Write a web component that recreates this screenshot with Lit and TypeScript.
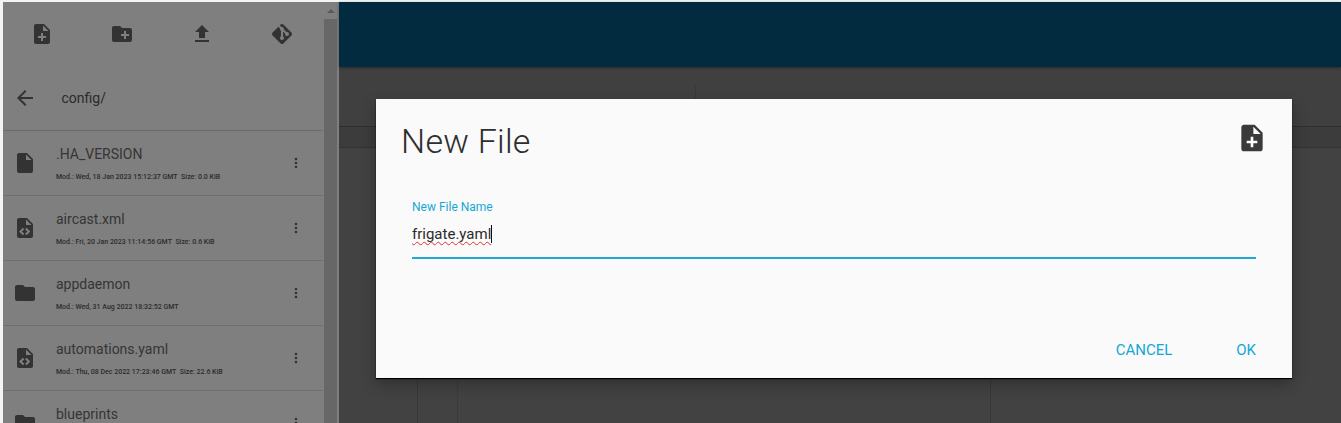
import { LitElement, html, css, svg } from "lit";
import { customElement } from "lit/decorators.js";

const P = {
  noteAdd: "M14 2H6c-1.1 0-1.99.9-1.99 2L4 20c0 1.1.89 2 1.99 2H18c1.1 0 2-.9 2-2V8l-6-6zm2 14h-3v3h-2v-3H8v-2h3v-3h2v3h3v2zm-3-7V3.5L18.5 9H13z",
  newFolder: "M20 6h-8l-2-2H4c-1.11 0-1.99.89-1.99 2L2 18c0 1.11.89 2 2 2h16c1.11 0 2-.89 2-2V8c0-1.11-.89-2-2-2zm-1 8h-3v3h-2v-3h-3v-2h3V9h2v3h3v2z",
  upload: "M9 16h6v-6h4l-7-7-7 7h4zm-4 2h14v2H5z",
  git: "M2.6,10.59L8.38,4.8L10.07,6.5C9.83,7.35 10.22,8.28 11,8.73V14.27C10.4,14.61 10,15.26 10,16A2,2 0 0,0 12,18A2,2 0 0,0 14,16C14,15.26 13.6,14.61 13,14.27V9.41L15.07,11.5C15,11.65 15,11.82 15,12A2,2 0 0,0 17,14A2,2 0 0,0 19,12A2,2 0 0,0 17,10C16.82,10 16.65,10 16.5,10.07L13.93,7.5C14.19,6.57 13.71,5.55 12.78,5.16C12.35,5 11.9,4.96 11.5,5.07L9.8,3.38L10.59,2.6C11.37,1.81 12.63,1.81 13.41,2.6L21.4,10.59C22.19,11.37 22.19,12.63 21.4,13.41L13.41,21.4C12.63,22.19 11.37,22.19 10.59,21.4L2.6,13.41C1.81,12.63 1.81,11.37 2.6,10.59Z",
  back: "M20 11H7.83l5.59-5.59L12 4l-8 8 8 8 1.41-1.41L7.83 13H20v-2z",
  file: "M13,9V3.5L18.5,9M6,2C4.89,2 4,2.89 4,4V20A2,2 0 0,0 6,22H18A2,2 0 0,0 20,20V8L14,2H6Z",
  code: "M13,9H18.5L13,3.5V9M6,2H14L20,8V20A2,2 0 0,1 18,22H6C4.89,22 4,21.1 4,20V4C4,2.89 4.89,2 6,2M6.12,15.5L9.86,19.24L11.28,17.83L8.95,15.5L11.28,13.17L9.86,11.76L6.12,15.5M17.28,15.5L13.54,11.76L12.12,13.17L14.45,15.5L12.12,17.83L13.54,19.24L17.28,15.5Z",
  folder: "M10,4H4C2.89,4 2,4.89 2,6V18A2,2 0 0,0 4,20H20A2,2 0 0,0 22,18V8C22,6.89 21.1,6 20,6H12L10,4Z",
  dots: "M12,16A2,2 0 0,1 14,18A2,2 0 0,1 12,20A2,2 0 0,1 10,18A2,2 0 0,1 12,16M12,10A2,2 0 0,1 14,12A2,2 0 0,1 12,14A2,2 0 0,1 10,12A2,2 0 0,1 12,10M12,4A2,2 0 0,1 14,6A2,2 0 0,1 12,8A2,2 0 0,1 10,6A2,2 0 0,1 12,4Z",
};

const icon = (d: string, cls = "") =>
  html`<svg class="icon ${cls}" viewBox="0 0 24 24">${svg`<path d=${d}></path>`}</svg>`;

const FILES = [
  { icon: P.file, name: ".HA_VERSION", meta: "Mod.: Wed, 18 Jan 2023 15:12:37 GMT\u00a0\u00a0Size: 0.0 KiB" },
  { icon: P.code, name: "aircast.xml", meta: "Mod.: Fri, 20 Jan 2023 11:14:56 GMT\u00a0\u00a0Size: 0.6 KiB" },
  { icon: P.folder, name: "appdaemon", meta: "Mod.: Wed, 31 Aug 2022 18:32:52 GMT" },
  { icon: P.code, name: "automations.yaml", meta: "Mod.: Thu, 08 Dec 2022 17:23:46 GMT\u00a0\u00a0Size: 22.6 KiB" },
  { icon: P.folder, name: "blueprints", meta: "" },
];

@customElement("app-root")
export class AppRoot extends LitElement {
  static styles = css`
    :host {
      display: block;
      position: relative;
      width: 1341px;
      height: 423px;
      overflow: hidden;
      background: #f4f4f4;
      font-family: Roboto, "Liberation Sans", sans-serif;
    }
    .page { display: flex; height: 421px; margin-top: 2px; }
    .icon { display: block; width: 24px; height: 24px; fill: #333; }
    .side {
      width: 336px;
      margin-left: 3px;
      flex: none;
      display: flex;
      background: #7f7f7f;
    }
    .list { width: 320px; flex: none; overflow: hidden; }
    .tools {
      display: grid;
      grid-template-columns: repeat(4, 80px);
      height: 60px;
      align-items: center;
      justify-items: center;
      padding: 4px 2px 0 0;
      box-sizing: border-box;
      margin-left: -1px;
    }
    .path {
      display: flex;
      align-items: center;
      border-bottom: 1px solid #6b6b6b;
      color: #2b2b2b;
      font-size: 14px;
      padding-top: 4px;
      box-sizing: border-box;
      height: 69px;
    }
    .path .icon { margin-left: 10px; margin-right: 24.5px; }
    .row {
      height: 64px;
      display: flex;
      align-items: center;
      border-bottom: 1px solid #6f6f6f;
    }
    .row > .icon { margin: 0 12px 0 10px; flex: none; }
    .row .text { flex: 1; min-width: 0; padding-left: 7px; }
    .name { font-size: 14px; line-height: 20px; color: #353535; }
    .meta { font-size: 7px; font-weight: 500; line-height: 12px; margin-top: 7px; color: #2c2c2c; white-space: pre; height: 12px; }
    .row .more { width: 16px; height: 16px; margin-right: 19px; flex: none; }
    .scroll { flex: 1; display: flex; flex-direction: column; background: #7f7f7f; padding-left: 1px; padding-right: 2px; }
    .arrow {
      height: 17px;
      display: flex;
      align-items: center;
      justify-content: center;
    }
    .arrow i {
      width: 0; height: 0;
      border-left: 4px solid transparent;
      border-right: 4px solid transparent;
      border-bottom: 4px solid #5a5a5a;
    }
    .thumb { flex: 1; background: #676767; }
    .main { flex: 1; display: flex; flex-direction: column; background: #404040; min-width: 0; }
    .bar { height: 65px; flex: none; background: #022b40; box-shadow: 0 1px 3px rgba(0,0,0,.35); }
    .gap { height: 18px; flex: none; }
    .tabs { height: 41px; flex: none; width: 357px; border-right: 1px solid #383838; box-sizing: border-box; }
    .strip { height: 22px; flex: none; border-top: 1px solid #2e2e2e; border-bottom: 1px solid #333; box-sizing: border-box; background: #3c3c3c; }
    .editor { flex: 1; display: flex; background: #424242; }
    .gutter { width: 79px; flex: none; border-right: 1px solid #383838; box-sizing: border-box; }
    .g2 { width: 40px; flex: none; border-right: 1px solid #3b3b3b; box-sizing: border-box; }
    .code { width: 533px; flex: none; border-right: 1px solid #383838; box-sizing: border-box; }
    .dialog {
      position: absolute;
      left: 376px;
      top: 99px;
      width: 916px;
      height: 279px;
      background: #fafafa;
      display: flex;
      flex-direction: column;
      box-shadow: 0 1px 1px #000, 0 6px 14px rgba(0,0,0,.28);
      box-sizing: border-box;
      padding: 0 36px;
    }
    .head { display: flex; justify-content: space-between; align-items: center; height: 84px; margin-left: -11px; margin-right: -12px; flex: none; }
    .head h2 { margin: 0; font-weight: 300; font-size: 34px; line-height: 84px; color: #2e2e2e; letter-spacing: .25px; }
    .head .icon { width: 32px; height: 32px; margin-top: -6px; fill: #3a3a3a; }
    .field { flex: none; height: 76px; border-bottom: 2px solid #1fa9d2; box-sizing: border-box; }
    .label { font-size: 12px; line-height: 14px; padding-top: 17px; color: #14a8d4; }
    .value { margin-top: 10px; font-size: 15px; line-height: 20px; color: #2a2a2a; display: flex; }
    .value span { text-decoration: underline wavy #d33; text-decoration-thickness: 1px; text-underline-offset: 2px; text-decoration-skip-ink: none; }
    .value i { width: 1px; height: 18px; background: #111; margin-top: 1px; }
    .actions { flex: 1; display: flex; justify-content: flex-end; align-items: flex-end; gap: 64px; padding-bottom: 19px; }
    .actions span { font-size: 15px; line-height: 18px; color: #14a8d4; }
  `;

  render() {
    return html`
      <div class="page">
        <div class="side">
          <div class="list">
            <div class="tools">
              ${icon(P.noteAdd)}${icon(P.newFolder)}${icon(P.upload)}${icon(P.git)}
            </div>
            <div class="path">${icon(P.back)}<span>config/</span></div>
            ${FILES.map(
              (f) => html`
                <div class="row">
                  ${icon(f.icon)}
                  <div class="text">
                    <div class="name">${f.name}</div>
                    <div class="meta">${f.meta}</div>
                  </div>
                  ${icon(P.dots, "more")}
                </div>
              `
            )}
          </div>
          <div class="scroll">
            <div class="arrow"><i></i></div>
            <div class="thumb"></div>
          </div>
        </div>
        <div class="main">
          <div class="bar"></div>
          <div class="gap"></div>
          <div class="tabs"></div>
          <div class="strip"></div>
          <div class="editor">
            <div class="gutter"></div>
            <div class="g2"></div>
            <div class="code"></div>
          </div>
        </div>
      </div>
      <div class="dialog">
        <div class="head">
          <h2>New File</h2>
          ${icon(P.noteAdd)}
        </div>
        <div class="field">
          <div class="label">New File Name</div>
          <div class="value"><span>frigate.yaml</span><i></i></div>
        </div>
        <div class="actions"><span>CANCEL</span><span>OK</span></div>
      </div>
    `;
  }
}
